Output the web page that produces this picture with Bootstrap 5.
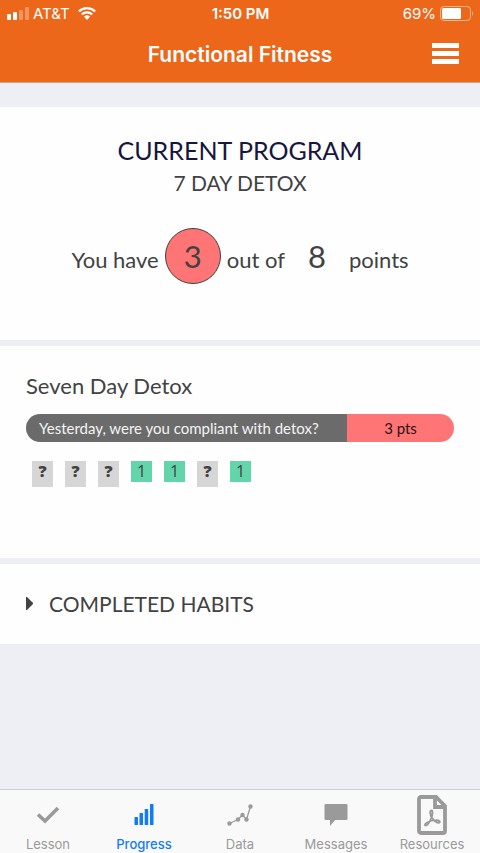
<!DOCTYPE html>
<html lang="en">
<head>
<meta charset="utf-8">
<meta name="viewport" content="width=device-width, initial-scale=1">
<title>Functional Fitness</title>
<link rel="stylesheet" href="https://cdn.jsdelivr.net/npm/bootstrap@5.3.0/dist/css/bootstrap.min.css">
<style>
body{background:#edeff5;color:#424242;font-family:Lato,"Liberation Sans",sans-serif;font-size:21px;line-height:32px}
.app-header,.tab-bar{font-family:Inter,"Liberation Sans",sans-serif}
.app-header{background:#ed671b;border-bottom:1px solid #c9a594}
.status-bar{height:28px;font-size:15px;line-height:28px;padding:0 6px 0 7px}
.title-bar{height:54px;padding:0 20px}
.title-bar h1{font-size:21px;line-height:28px}
.menu-btn svg{display:block}
.panel-stack{gap:6px}
.panel{background:#fefefe}
.program-panel{padding:26px 16px 56px}
.program-panel h2{color:#16163f;font-size:25px;line-height:34px}
.points-row{margin-top:29px;font-size:22px}
.score{width:64px;line-height:56px;font-size:31px;text-align:center}
.score-current{width:56px;height:56px;background:#ff7474;border:1px solid #424242;line-height:54px;margin:0 6px}
.habit-panel{padding:26px 26px 71px}
.habit-panel h2{font-size:22px;line-height:28px}
.habit-bar{height:28px;font-size:15px;line-height:28px;margin-top:14px}
.habit-name{background:#6b6b6b;color:#f4f4f4;padding-left:13px}
.habit-points{background:#ff7474;color:#2a1515}
.day-list{gap:12px;margin:19px 0 0 6px}
.day{width:21px;font-family:"Open Sans","Liberation Sans",sans-serif;font-size:16px;line-height:21px;text-align:center}
.day-unknown{background:#d6d6d6;height:26px;font-weight:800}
.day-done{background:#62d5ab;height:21px}
.done-panel{padding:26px}
.done-btn{gap:15px;font-size:21px;line-height:28px;color:#424242}
.tab-bar{background:#f9f9f9;border-top:1px solid #cfd0d6;height:64px}
.tab-link{color:#9a9a9a;font-size:13px;line-height:16px}
.tab-link.active{color:#127cf8;font-weight:500}
.tab-icon{height:46px;padding-top:3px}
</style>
</head>
<body class="min-vh-100 d-flex flex-column">
<header class="app-header text-white">
  <div class="status-bar row g-0">
    <div class="col d-flex align-items-center">
      <svg width="22" height="14" viewBox="0 0 22 14" fill="#fff" role="img" aria-label="Signal"><rect y="7" width="4" height="6" rx="1"/><rect x="6" y="5" width="4" height="8" rx="1"/><g opacity=".3"><rect x="12" y="3" width="4" height="10" rx="1"/><rect x="18" width="4" height="13" rx="1"/></g></svg>
      <span class="ms-1">AT&amp;T</span>
      <svg class="ms-2" width="18" height="14" viewBox="0 0 18 14" fill="none" stroke="#fff" stroke-width="2.3" role="img" aria-label="Wi-Fi"><path d="M.9 4.500A11.600 11.600 0 0 1 17.100 4.500M3.800 7.500a7.500 7.500 0 0 1 10.400 0"/><path d="M6 9.700a4.300 4.300 0 0 1 6 0L9 12.900z" fill="#fff" stroke="none"/></svg>
    </div>
    <div class="col-auto fw-semibold">1:50 PM</div>
    <div class="col d-flex align-items-center justify-content-end">
      <span>69%</span>
      <svg class="ms-1" width="34" height="16" viewBox="0 0 34 16" role="img" aria-label="Battery"><rect x=".5" y=".5" width="30" height="14" rx="3.500" fill="none" stroke="#fff" stroke-opacity=".5"/><rect x="2" y="2" width="19" height="11" rx="1.500" fill="#fff"/><path d="M32 5v5q2-2.500 0-5" fill="#fff" opacity=".5"/></svg>
    </div>
  </div>
  <div class="title-bar row g-0 align-items-center">
    <div class="col"></div>
    <h1 class="col-auto mb-0 fw-semibold">Functional Fitness</h1>
    <div class="col d-flex justify-content-end">
      <button class="menu-btn btn p-0 border-0" type="button" aria-label="Menu"><svg width="28" height="24" viewBox="0 0 28 24" fill="#fff"><path d="M0 0h27v5H0zM0 8h27v5H0zM0 16h27v5H0z"/></svg></button>
    </div>
  </div>
</header>
<main class="panel-stack flex-grow-1 pt-4 d-grid align-content-start">
  <section class="panel program-panel text-center">
    <h2 class="mb-0 fw-normal">CURRENT PROGRAM</h2>
    <p class="mb-0">7 DAY DETOX</p>
    <div class="points-row d-flex justify-content-center align-items-baseline">
      <span>You have</span><span class="score score-current rounded-circle">3</span><span>out of</span><span class="score">8</span><span>points</span>
    </div>
  </section>
  <section class="panel habit-panel">
    <h2 class="mb-0 fw-normal">Seven Day Detox</h2>
    <div class="habit-bar row g-0 rounded-pill overflow-hidden">
      <div class="habit-name col-9">Yesterday, were you compliant with detox?</div>
      <div class="habit-points col-3 text-center">3 pts</div>
    </div>
    <ul class="day-list list-unstyled d-flex align-items-start">
      <li class="day day-unknown">?</li><li class="day day-unknown">?</li><li class="day day-unknown">?</li><li class="day day-done">1</li><li class="day day-done">1</li><li class="day day-unknown">?</li><li class="day day-done">1</li>
    </ul>
  </section>
  <section class="panel done-panel">
    <button class="done-btn btn p-0 border-0 d-flex align-items-center" type="button" aria-expanded="false"><svg width="8" height="14" viewBox="0 0 8 14" fill="#424242" aria-hidden="true"><path d="M0 0h1l6 6v1l-6 6H0z"/></svg>COMPLETED HABITS</button>
  </section>
</main>
<nav class="tab-bar row g-0 text-center" aria-label="Main">
  <a class="tab-link col text-decoration-none" href="#lesson"><span class="tab-icon d-flex align-items-center justify-content-center"><svg width="24" height="20" viewBox="0 0 24 20" fill="none" stroke="#9a9a9a" stroke-width="3.600"><path d="M2 9.500l7 6.500L22 3"/></svg></span>Lesson</a>
  <a class="tab-link active col text-decoration-none" href="#progress" aria-current="page"><span class="tab-icon d-flex align-items-center justify-content-center"><svg width="20" height="22" viewBox="0 0 20 22" fill="#127cf8"><rect x=".5" y="13" width="3.500" height="8" rx=".5"/><rect x="5.500" y="9" width="3.500" height="12" rx=".5"/><rect x="10.700" y="5" width="3.500" height="16" rx=".5"/><rect x="16" width="3.500" height="21" rx=".5"/></svg></span>Progress</a>
  <a class="tab-link col text-decoration-none" href="#data"><span class="tab-icon d-flex align-items-center justify-content-center"><svg width="26" height="22" viewBox="0 0 26 22" fill="#9a9a9a"><path d="M2.500 19.500l8.500-4 4.500-4.500 4 4.500 4-13" fill="none" stroke="#9a9a9a" stroke-width="1.300"/><circle cx="2.500" cy="19.500" r="2.200"/><circle cx="11" cy="15.500" r="2.200"/><circle cx="15.500" cy="11" r="2.200"/><circle cx="19.500" cy="15.500" r="2.200"/><circle cx="23.500" cy="2.500" r="2.200"/></svg></span>Data</a>
  <a class="tab-link col text-decoration-none" href="#messages"><span class="tab-icon d-flex align-items-center justify-content-center"><svg width="24" height="22" viewBox="0 0 24 22" fill="#9a9a9a"><path d="M1.500 0h21q1 0 1 1v14q0 1-1 1H11l-5 6v-6H1.500q-1 0-1-1V1q0-1 1-1"/></svg></span>Messages</a>
  <a class="tab-link col text-decoration-none" href="#resources"><span class="tab-icon d-flex align-items-center justify-content-center"><svg width="30" height="40" viewBox="0 0 30 40" fill="none" stroke="#9a9a9a"><path d="M4 2h15l9 9v25q0 2-2 2H4q-2 0-2-2V4q0-2 2-2zM18 2v10h10" stroke-width="3.800"/><path d="M14.500 15.500c-2 0-1.500 4 .3 7 2 3 5 5.500 7 5.200 2.200-.4.500-2.700-2.800-2.600-3.200 0-7 1.200-9.200 2.600-2.300 1.500-2.300 3-1 2.900 1.600-.2 4.200-4.200 5.700-8.100 1.300-3.400 1.500-7 0-7z" stroke-width="1.900"/></svg></span>Resources</a>
</nav>
<script src="https://cdn.jsdelivr.net/npm/bootstrap@5.3.0/dist/js/bootstrap.bundle.min.js"></script>
</body>
</html>
